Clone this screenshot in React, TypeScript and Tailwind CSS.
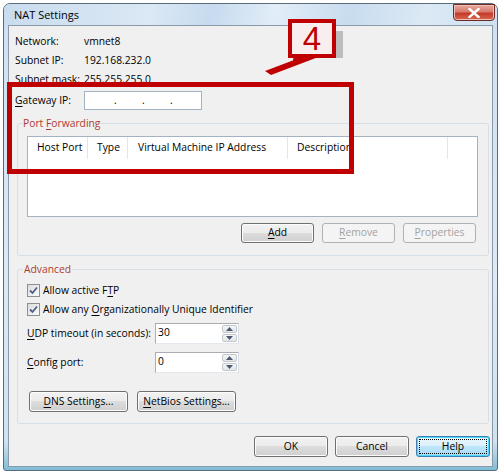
import React from "react";

function U({ children }: { children: React.ReactNode }) {
  return <span className="underline underline-offset-[2px]">{children}</span>;
}

function Btn({
  children,
  disabled,
  focused,
  className = "",
}: {
  children: React.ReactNode;
  disabled?: boolean;
  focused?: boolean;
  className?: string;
}) {
  if (disabled) {
    return (
      <div
        className={`flex items-center justify-center rounded-[3px] border border-[#adb2b5] bg-[#f4f4f4] text-[#a3a3a3] ${className}`}
      >
        {children}
      </div>
    );
  }
  if (focused) {
    return (
      <div
        className={`flex items-center justify-center rounded-[3px] border border-[#3c7fb1] bg-[linear-gradient(#eaf6fd_0%,#d9f0fc_50%,#bee6fd_50%,#a7d9f5_100%)] p-[2px] text-black shadow-[inset_0_0_0_1px_#48d8fb] ${className}`}
      >
        <div className="flex h-full w-full items-center justify-center border border-dotted border-black">
          {children}
        </div>
      </div>
    );
  }
  return (
    <div
      className={`flex items-center justify-center rounded-[3px] border border-[#707070] bg-[linear-gradient(#f2f2f2_0%,#ebebeb_50%,#dddddd_50%,#cfcfcf_100%)] text-black shadow-[inset_0_0_0_1px_#fcfcfc] ${className}`}
    >
      {children}
    </div>
  );
}

function Check() {
  return (
    <div className="flex h-[13px] w-[13px] shrink-0 items-center justify-center border border-[#8e8f8f] bg-[linear-gradient(135deg,#dcdcdc,#fbfbfb)]">
      <svg width="9" height="9" viewBox="0 0 9 9">
        <path d="M1 4.5 L3.5 7 L8 1.5" fill="none" stroke="#4d6185" strokeWidth="1.8" />
      </svg>
    </div>
  );
}

function Spin({ value }: { value: string }) {
  return (
    <div className="flex h-[21px] w-[84px] items-stretch border border-[#abadb3] border-b-[#e3e9ef] border-r-[#dbdfe6] bg-white">
      <div className="flex-1 pl-[2px] leading-[16px]">{value}</div>
      <div className="flex w-[16px] flex-col gap-[1px] py-[1px] pr-[1px]">
        <div className="flex flex-1 items-center justify-center rounded-[2px] border border-[#c3c8ce] bg-[linear-gradient(#f5f5f5,#e2e5e8)]">
          <svg width="7" height="4" viewBox="0 0 7 4">
            <path d="M0 4 L3.5 0 L7 4 Z" fill="#4b5a70" />
          </svg>
        </div>
        <div className="flex flex-1 items-center justify-center rounded-[2px] border border-[#c3c8ce] bg-[linear-gradient(#f5f5f5,#e2e5e8)]">
          <svg width="7" height="4" viewBox="0 0 7 4">
            <path d="M0 0 L3.5 4 L7 0 Z" fill="#4b5a70" />
          </svg>
        </div>
      </div>
    </div>
  );
}

export default function App() {
  return (
    <div className="relative h-[473px] w-[502px] overflow-hidden whitespace-nowrap bg-white pl-[3px] pt-[3px] font-['Open_Sans',sans-serif] text-[10.3px] text-black">
      {/* window */}
      <div className="flex h-[468px] w-[495px] flex-col rounded-b-[3px] rounded-t-[7px] border border-[#5b6b7c] bg-[linear-gradient(#cfe0f0_0%,#dde9f5_60%,#cfe2ef_94%,#7fbcd6_100%)] px-[4px] pb-[3px]">
        {/* title bar */}
        <div className="relative -mx-[4px] flex h-[21px] items-center rounded-t-[6px] bg-[linear-gradient(100deg,#c9dcee_0%,#dbe8f5_30%,#c6dbef_42%,#e2edf7_55%,#c8dcef_70%,#dce9f5_85%,#cfe1f1_100%)] px-[10px]">
          <span className="text-[11px] leading-[14px] text-black">NAT Settings</span>
          <div className="absolute right-[2px] top-[0px] flex h-[17px] w-[42px] items-center justify-center rounded-b-[4px] border border-[#6b2a24] bg-[linear-gradient(#e9a99e_0%,#d77b6d_45%,#c4392a_55%,#d66a50_100%)] shadow-[inset_0_0_0_1px_#f0c0b8]">
            <svg width="12" height="10" viewBox="0 0 12 10">
              <path d="M1.5 1 L10.5 9 M10.5 1 L1.5 9" stroke="#ffffff" strokeWidth="2.4" strokeLinecap="square" />
            </svg>
          </div>
        </div>
        {/* client */}
        <div className="flex-1 border border-[#8b9aaa] bg-[#f0f0f0] pl-[6px] pt-[6px]">
          <div className="flex h-[19px] items-center">
            <div className="w-[69px]">Network:</div>
            <div>vmnet8</div>
          </div>
          <div className="flex h-[19px] items-center">
            <div className="w-[69px]">Subnet IP:</div>
            <div>192.168.232.0</div>
          </div>
          <div className="flex h-[19px] items-center">
            <div className="w-[69px]">Subnet mask:</div>
            <div>255.255.255.0</div>
          </div>
          <div className="mt-[2px] flex h-[19px] items-center">
            <div className="w-[69px]">
              <U>G</U>ateway IP:
            </div>
            <div className="flex h-[19px] w-[118px] items-center gap-[25px] border border-[#a3b3c6] bg-white pl-[29px]">
              <span className="w-[3px]">.</span>
              <span className="w-[3px]">.</span>
              <span className="w-[3px]">.</span>
            </div>
          </div>

          {/* Port Forwarding */}
          <fieldset className="ml-[2px] mt-[6px] w-[472px] rounded-[3px] border border-[#d5dfe5] pb-[12px]">
            <legend className="ml-[4px] px-[1px] leading-[15px] text-[#ad3b2f]">
              Port <U>F</U>orwarding
            </legend>
            <div className="ml-[9px] mt-[5px] h-[81px] w-[451px] border border-[#a5b2c2] bg-white">
              <div className="flex h-[22px] items-center">
                <div className="flex h-full w-[60px] items-center border-r border-[#e5e5e5] pl-[9px]">Host Port</div>
                <div className="flex h-full w-[40px] items-center border-r border-[#e5e5e5] pl-[9px]">Type</div>
                <div className="flex h-full w-[160px] items-center border-r border-[#e5e5e5] pl-[10px]">Virtual Machine IP Address</div>
                <div className="flex h-full w-[160px] items-center border-r border-[#e5e5e5] pl-[9px]">Description</div>
              </div>
            </div>
            <div className="mt-[6px] flex justify-end gap-[8px] pr-[12px]">
              <Btn className="h-[20px] w-[73px]">
                <span>
                  <U>A</U>dd
                </span>
              </Btn>
              <Btn disabled className="h-[20px] w-[73px]">
                <span>
                  <U>R</U>emove
                </span>
              </Btn>
              <Btn disabled className="h-[20px] w-[73px]">
                <span>
                  <U>P</U>roperties
                </span>
              </Btn>
            </div>
          </fieldset>

          {/* Advanced */}
          <fieldset className="ml-[2px] mt-[6px] w-[472px] rounded-[3px] border border-[#d5dfe5] pb-[11px]">
            <legend className="ml-[5px] px-[1px] leading-[15px] text-[#ad3b2f]">Advanced</legend>
            <div className="ml-[9px] mt-[4px] flex h-[19px] items-center gap-[3px]">
              <Check />
              <span>
                Allow active F<U>T</U>P
              </span>
            </div>
            <div className="ml-[9px] flex h-[19px] items-center gap-[3px]">
              <Check />
              <span>
                Allow any <U>O</U>rganizationally Unique Identifier
              </span>
            </div>
            <div className="ml-[9px] mt-[4px] flex h-[21px] items-center">
              <div className="w-[128px]">
                <U>U</U>DP timeout (in seconds):
              </div>
              <Spin value="30" />
            </div>
            <div className="ml-[9px] mt-[8px] flex h-[21px] items-center">
              <div className="w-[128px]">
                <U>C</U>onfig port:
              </div>
              <Spin value="0" />
            </div>
            <div className="ml-[11px] mt-[18px] flex gap-[9px]">
              <Btn className="h-[21px] w-[99px]">
                <span>
                  <U>D</U>NS Settings...
                </span>
              </Btn>
              <Btn className="h-[21px] w-[99px]">
                <span>
                  <U>N</U>etBios Settings...
                </span>
              </Btn>
            </div>
          </fieldset>

          <div className="mt-[12px] flex justify-end gap-[7px] pr-[2px]">
            <Btn className="h-[21px] w-[74px]">OK</Btn>
            <Btn className="h-[21px] w-[74px]">Cancel</Btn>
            <Btn focused className="h-[21px] w-[74px]">Help</Btn>
          </div>
        </div>
      </div>

      {/* annotation overlay */}
      <div className="absolute left-[7px] top-[82px] h-[92px] w-[347px] border-[5px] border-[#c00000]" />
      <svg className="absolute left-0 top-0" width="502" height="100" viewBox="0 0 502 100">
        <polygon points="265,71 294,60 298,56 321,56 271,75" fill="#c00000" />
        <circle cx="296" cy="60" r="3" fill="#c00000" />
      </svg>
      <div className="absolute left-[336px] top-[31px] h-[27px] w-[7px] bg-[#bdbdbd]" />
      <div className="absolute left-[288px] top-[19px] flex h-[39px] w-[48px] items-center justify-center border-[4px] border-[#c00000] bg-[#f9eeee] font-['Liberation_Sans',sans-serif] text-[33px] leading-none text-[#c00000]">
        4
      </div>
    </div>
  );
}
